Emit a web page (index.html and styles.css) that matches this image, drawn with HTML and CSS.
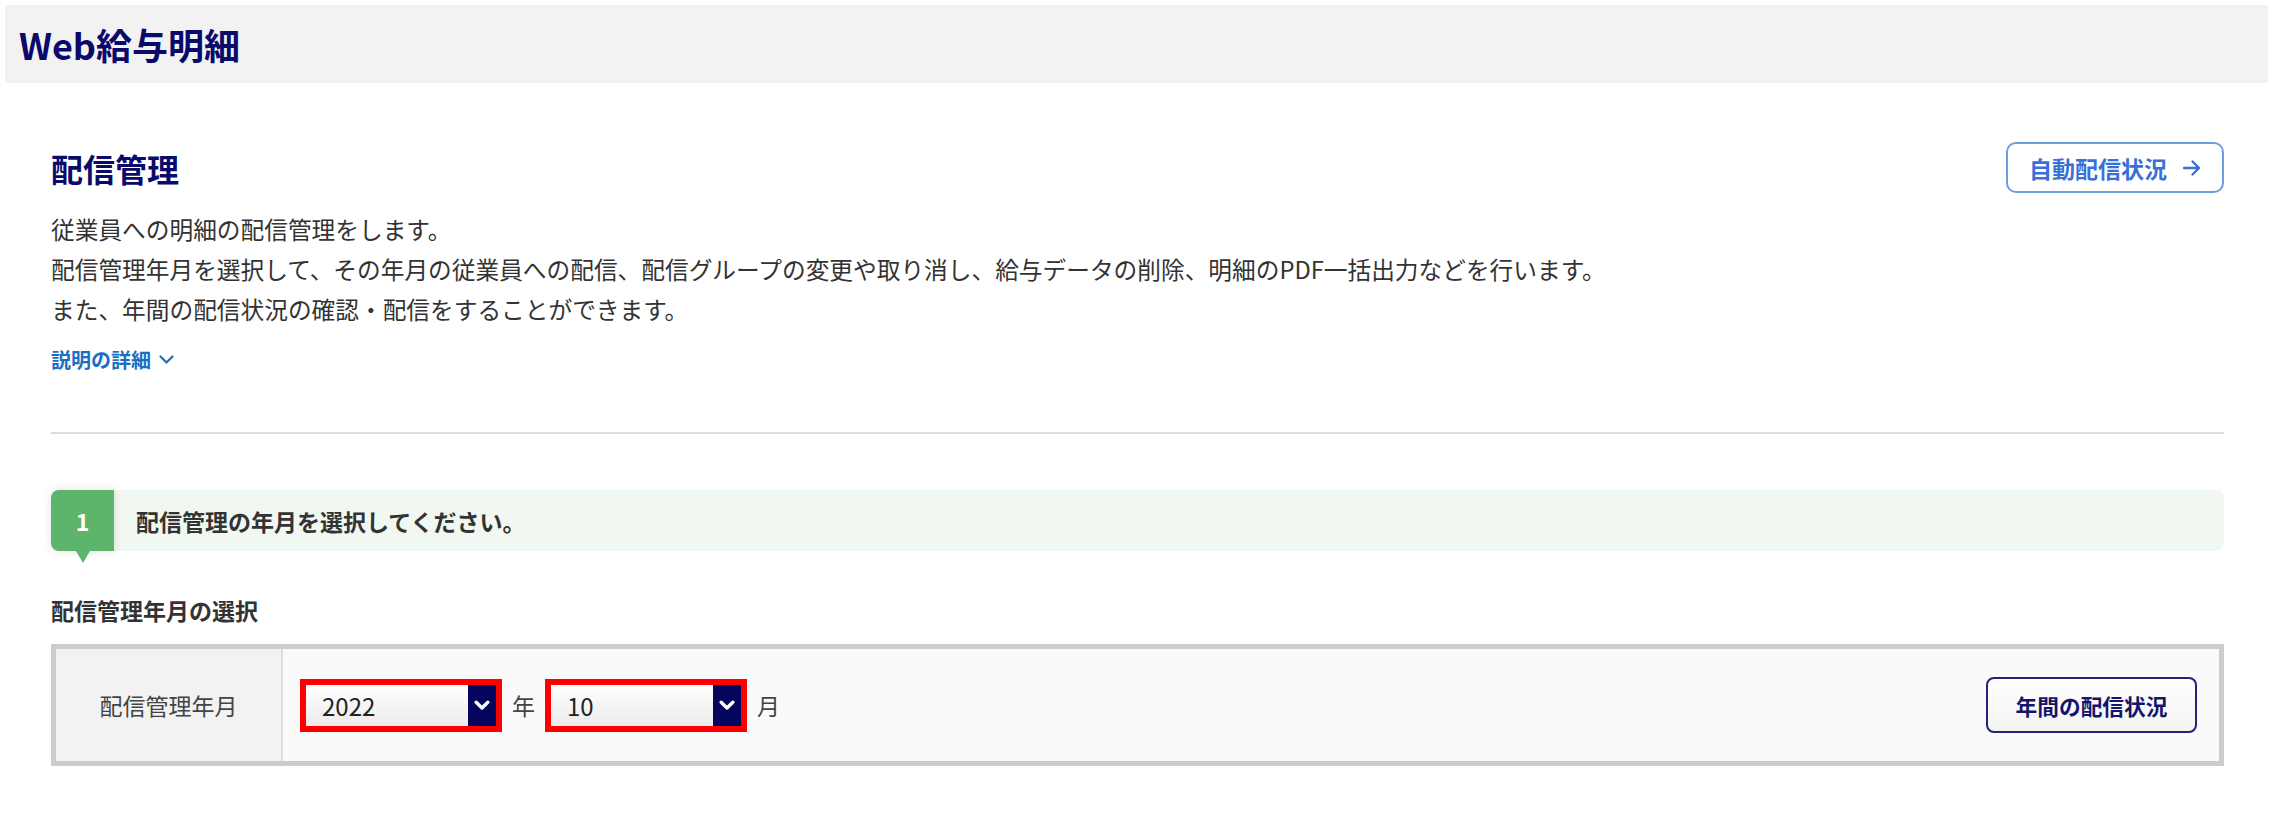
FILE: index.html
```html
<!DOCTYPE html>
<html lang="ja">
<head>
<meta charset="utf-8">
<title>Web給与明細 - 配信管理</title>
<link rel="stylesheet" href="styles.css">
</head>
<body>
<header class="app-header">
  <h1 class="app-title">Web給与明細</h1>
</header>
<main class="content">
  <div class="page-head">
    <h2 class="page-title">配信管理</h2>
    <a class="btn-auto" href="#">自動配信状況
      <svg class="icon-arrow" width="18" height="16" viewBox="0 0 18 16"><path d="M1 8H16M9.5 1.5L16 8L9.5 14.5" fill="none" stroke="currentColor" stroke-width="2.4" stroke-linecap="round" stroke-linejoin="round"/></svg>
    </a>
  </div>
  <div class="desc">
    <p>従業員への明細の配信管理をします。</p>
    <p>配信管理年月を選択して、その年月の従業員への配信、配信グループの変更や取り消し、給与データの削除、明細のPDF一括出力などを行います。</p>
    <p>また、年間の配信状況の確認・配信をすることができます。</p>
  </div>
  <div class="detail-row">
    <a class="detail-toggle" href="#">説明の詳細
      <svg width="15" height="9" viewBox="0 0 15 9"><path d="M1.5 1.5L7.5 7.5L13.5 1.5" fill="none" stroke="currentColor" stroke-width="2.2" stroke-linecap="round" stroke-linejoin="round"/></svg>
    </a>
  </div>
  <hr class="divider">
  <div class="step">
    <div class="step-num">1</div>
    <div class="step-text">配信管理の年月を選択してください。</div>
  </div>
  <h3 class="section-title">配信管理年月の選択</h3>
  <div class="form-table">
    <div class="form-label">配信管理年月</div>
    <div class="form-value">
      <div class="select-frame">
        <span class="select-value">2022</span>
        <span class="select-arrow"><svg width="16" height="11" viewBox="0 0 16 11"><path d="M2.2 2.2L8 8L13.8 2.2" fill="none" stroke="#fff" stroke-width="3.4" stroke-linecap="round" stroke-linejoin="round"/></svg></span>
      </div>
      <span class="unit">年</span>
      <div class="select-frame">
        <span class="select-value">10</span>
        <span class="select-arrow"><svg width="16" height="11" viewBox="0 0 16 11"><path d="M2.2 2.2L8 8L13.8 2.2" fill="none" stroke="#fff" stroke-width="3.4" stroke-linecap="round" stroke-linejoin="round"/></svg></span>
      </div>
      <span class="unit">月</span>
      <button class="btn-annual" type="button">年間の配信状況</button>
    </div>
  </div>
</main>
</body>
</html>
```

FILE: styles.css
```css
body {
  margin: 0;
  font-family: "Noto Sans CJK JP", "Noto Sans", sans-serif;
  color: #333;
  background: #fff;
}

.app-header {
  margin: 5px 4px 0 5px;
  height: 78px;
  background: #f2f2f2;
  display: flex;
  align-items: center;
  padding-left: 14px;
}

.app-title {
  margin: 0;
  font-size: 36px;
  font-weight: 700;
  color: #0a0a6b;
  line-height: 1;
}

.content {
  padding: 59px 48px 40px 51px;
}

.page-head {
  display: flex;
  justify-content: space-between;
  align-items: center;
  height: 51px;
}

.page-title {
  margin: 0;
  font-size: 32px;
  font-weight: 700;
  color: #0a0a6b;
  line-height: 1;
}

.btn-auto {
  width: 218px;
  height: 51px;
  box-sizing: border-box;
  border: 2px solid #6d9ce0;
  border-radius: 10px;
  display: flex;
  align-items: center;
  justify-content: center;
  gap: 16px;
  color: #3a6fd8;
  font-size: 23px;
  font-weight: 700;
  text-decoration: none;
}

.desc {
  margin-top: 16px;
  font-size: 23.7px;
  line-height: 40px;
  color: #333;
}

.desc p {
  margin: 0;
}

.detail-row {
  margin-top: 15px;
  height: 30px;
  display: flex;
  align-items: center;
}

.detail-toggle {
  display: inline-flex;
  align-items: center;
  gap: 8px;
  font-size: 20px;
  font-weight: 700;
  color: #1a6fc4;
  text-decoration: none;
}

.divider {
  margin: 58px 0 0;
  border: 0;
  border-top: 2px solid #dddddd;
}

.step {
  margin-top: 56px;
  display: flex;
  align-items: center;
  height: 61px;
  background: #f1f8f1;
  border-radius: 8px;
}

.step-num {
  position: relative;
  width: 63px;
  align-self: stretch;
  background: #5cb56b;
  border-radius: 8px 0 0 8px;
  color: #fff;
  font-weight: 700;
  font-size: 23px;
  display: flex;
  align-items: center;
  justify-content: center;
  box-shadow: 0 0 10px rgba(0, 0, 0, 0.12);
}

.step-num::after {
  content: "";
  position: absolute;
  left: 50%;
  top: 100%;
  margin-left: -7px;
  border-left: 7px solid transparent;
  border-right: 7px solid transparent;
  border-top: 12px solid #5cb56b;
}

.step-text {
  padding-left: 22px;
  font-size: 23px;
  font-weight: 700;
  color: #333;
}

.section-title {
  margin: 42px 0 0;
  font-size: 23px;
  font-weight: 700;
  line-height: 34px;
  color: #333;
}

.form-table {
  margin-top: 17px;
  display: flex;
  height: 122px;
  box-sizing: border-box;
  border: 5px solid #cccccc;
}

.form-label {
  width: 225px;
  flex: none;
  background: #f2f2f2;
  border-right: 2px solid #dedede;
  display: flex;
  align-items: center;
  justify-content: center;
  font-size: 23px;
  color: #444;
}

.form-value {
  flex: 1;
  background: #fafafa;
  display: flex;
  align-items: center;
  gap: 10px;
  padding: 0 22px 0 17px;
}

.select-frame {
  width: 202px;
  height: 53px;
  box-sizing: border-box;
  border: 6px solid #ff0000;
  display: flex;
  background: linear-gradient(#ffffff, #ebebeb);
}

.select-value {
  flex: 1;
  padding-left: 16px;
  font-size: 24px;
  color: #222;
  display: flex;
  align-items: center;
}

.select-arrow {
  width: 28px;
  background: #05055e;
  display: flex;
  align-items: center;
  justify-content: center;
}

.unit {
  font-size: 23px;
  color: #444;
}

.btn-annual {
  margin-left: auto;
  width: 211px;
  height: 56px;
  border: 2px solid #23237a;
  border-radius: 8px;
  background: linear-gradient(#ffffff, #f3f3f3);
  color: #14146b;
  font-family: "Noto Sans CJK JP", "Noto Sans", sans-serif;
  font-size: 21.7px;
  font-weight: 700;
}
```
